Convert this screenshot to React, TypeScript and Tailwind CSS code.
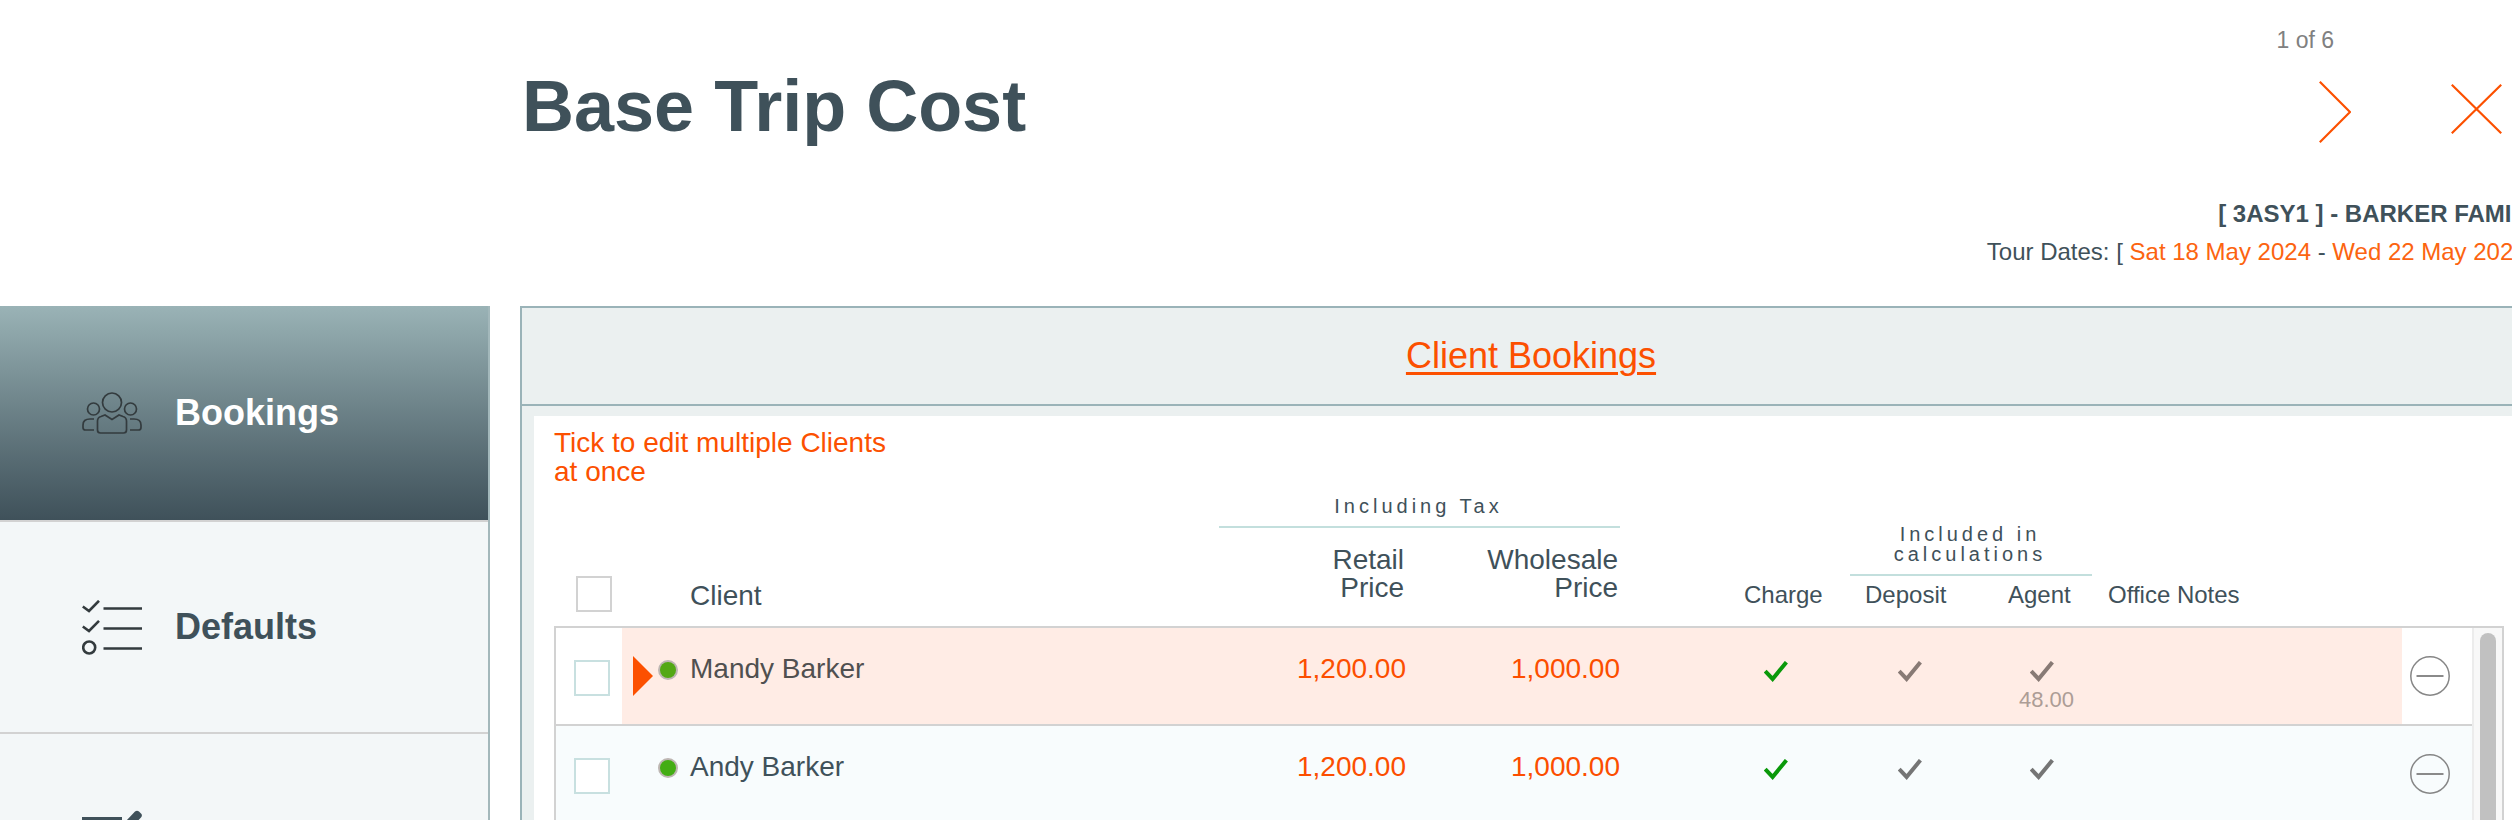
import React from "react";

function Check({ color }: { color: string }) {
  return (
    <svg width="24" height="21" viewBox="0 0 24 21" className="block">
      <path d="M1.2 10.2 L8.6 18 L22.4 1.2" fill="none" stroke={color} strokeWidth="4" />
    </svg>
  );
}

function Minus() {
  return (
    <svg width="40" height="40" viewBox="0 0 40 40" className="block">
      <circle cx="20" cy="20" r="19.2" fill="none" stroke="#868686" strokeWidth="1.5" />
      <path d="M6.5 20 H33.5" stroke="#8a8a8a" strokeWidth="2" />
    </svg>
  );
}

function UsersIcon() {
  return (
    <svg width="60" height="42" viewBox="0 0 60 42" fill="none" stroke="#333b3e" strokeWidth="1.7" className="block">
      <circle cx="30" cy="10.5" r="9.5" />
      <circle cx="11.5" cy="17" r="6" />
      <circle cx="48.5" cy="17" r="6" />
      <path d="M15.5 38 V29 Q15.5 25.5 19 24.5 L23 23 L30 27.5 L37 23 L41 24.5 Q44.5 25.5 44.5 29 V38 Q44.5 41 41.5 41 H18.5 Q15.5 41 15.5 38 Z" />
      <path d="M12 27 H8 Q1 27 1 33 V35.5 Q1 38 3.5 38 H12" />
      <path d="M48 27 H52 Q59 27 59 33 V35.5 Q59 38 56.5 38 H48" />
    </svg>
  );
}

function ListIcon() {
  return (
    <svg width="60" height="55" viewBox="0 0 60 55" fill="none" stroke="#333b3e" className="block">
      <path d="M0.8 6.5 L7 11 L17 0.8" strokeWidth="2.6" />
      <path d="M0.8 26.5 L7 31 L17 20.8" strokeWidth="2.6" />
      <circle cx="7.2" cy="47.5" r="6" strokeWidth="2.6" />
      <path d="M21.5 8.5 H60 M21.5 28.5 H60 M21.5 48.5 H60" strokeWidth="2.6" />
    </svg>
  );
}

function EditIcon() {
  return (
    <svg width="60" height="30" viewBox="0 0 60 30" className="block">
      <rect x="0" y="7" width="40" height="3" fill="#3f515a" />
      <path d="M44 11 L53 1.5 Q55 0 57 1.5 L59.5 4 Q60.5 6 59 7.5 L50 17 Z" fill="#3f515a" />
    </svg>
  );
}

function Row({ active }: { active: boolean }) {
  const check = active ? "#887a75" : "#757575";
  return (
    <div className="flex h-[98px] border-b-2 border-[#d2d2d2]">
      <div className={`w-[66px] pl-[18px] pt-[32px] ${active ? "bg-white" : "bg-[#f8fcfd]"}`}>
        <div className="w-[36px] h-[36px] border-2 border-[#c8e0e0] bg-white" />
      </div>
      <div className={`flex w-[1780px] ${active ? "bg-[#ffece5] text-[#505050]" : "bg-[#f8fcfd] text-[#3f515a]"}`}>
        <div className="w-[69px] flex items-start pl-[11px]">
          <div className="w-[20px] pt-[28px]">
            {active && (
              <svg width="20" height="40" viewBox="0 0 20 40" className="block">
                <path d="M0 0 L20 20 L0 40 Z" fill="#fc5000" />
              </svg>
            )}
          </div>
          <div className="ml-[5px] mt-[32px] w-[20px] h-[20px] rounded-full border-2 border-[#bdb6b2] flex items-center justify-center bg-[#bdb6b2]">
            <div className={`w-[16px] h-[16px] rounded-full ${active ? "bg-[#53a814]" : "bg-[#43ad14]"}`} />
          </div>
        </div>
        <div className="w-[528px] pt-[25px] text-[28px] leading-[32px] ml-[-1px]">{active ? "Mandy Barker" : "Andy Barker"}</div>
        <div className="w-[188px] pt-[25px] text-[28px] leading-[32px] text-right text-[#fc4e00]">1,200.00</div>
        <div className="w-[214px] pt-[25px] text-[28px] leading-[32px] text-right text-[#fc4e00]">1,000.00</div>
        <div className="w-[230px] pl-[144px] pt-[33px]"><Check color="#0a990a" /></div>
        <div className="w-[121px] pl-[48px] pt-[33px]"><Check color={check} /></div>
        <div className="w-[121px] pl-[48px] pt-[33px]">
          <div className="ml-[11px]"><Check color={check} /></div>
          {active && <div className="mt-[6px] text-[22px] leading-[24px] text-[#ad9d96]">48.00</div>}
        </div>
        <div className="flex-1" />
      </div>
      <div className={`w-[70px] pl-[8px] pt-[28px] ${active ? "bg-white" : "bg-[#f8fcfd]"}`}>
        <Minus />
      </div>
    </div>
  );
}

export default function App() {
  return (
    <div className="w-full h-[820px] overflow-hidden bg-white font-['Liberation_Sans',Arial,sans-serif] text-[#3f515a]">
      <div className="w-[2540px]">
        <header className="h-[306px] flex justify-between">
          <h1 className="ml-[522px] mt-[66px] text-[72px] leading-[80px] font-bold whitespace-nowrap">Base Trip Cost</h1>
          <div className="flex flex-col items-end">
            <div className="mt-[27px] mr-[206px] text-[23px] leading-[26px] text-[#808080]">1 of 6</div>
            <div className="mt-[28px] mr-[38px] flex items-start gap-[100px]">
              <svg width="32" height="62" viewBox="0 0 32 62" fill="none" stroke="#fc5000" strokeWidth="2.2" className="block">
                <path d="M0.8 0.8 L31 31 L0.8 61.2" />
              </svg>
              <svg width="51" height="50" viewBox="0 0 51 50" fill="none" stroke="#fc5000" strokeWidth="2.2" className="block mt-[3px]">
                <path d="M0.8 0.8 L50.2 49.2 M50.2 0.8 L0.8 49.2" />
              </svg>
            </div>
            <div className="mt-[57px] text-[24px] leading-[28px] font-bold whitespace-nowrap">[ 3ASY1 ] - BARKER FAMILY</div>
            <div className="mt-[10px] text-[24px] leading-[28px] whitespace-nowrap">
              Tour Dates: [ <span className="text-[#fc6410]">Sat 18 May 2024</span> - <span className="text-[#fc6410]">Wed 22 May 2024</span> ]
            </div>
          </div>
        </header>
        <div className="flex h-[514px] items-stretch">
          <aside className="w-[490px] shrink-0 border-r-2 border-[#a3b8bb] bg-[#f3f7f8] flex flex-col">
            <div className="h-[216px] shrink-0 border-b-2 border-[#d2d2d2] bg-gradient-to-b from-[#9ab3b6] to-[#3f515a] flex items-center pl-[82px]">
              <UsersIcon />
              <span className="ml-[33px] text-[36px] leading-[40px] font-bold text-white">Bookings</span>
            </div>
            <div className="h-[212px] shrink-0 border-b-2 border-[#d2d2d2] flex items-center pl-[82px]">
              <ListIcon />
              <span className="ml-[33px] text-[36px] leading-[40px] font-bold">Defaults</span>
            </div>
            <div className="pl-[82px] pt-[76px]">
              <EditIcon />
            </div>
          </aside>
          <main className="ml-[30px] flex-1 border-l-2 border-t-2 border-[#9ab3b8] bg-[#ebf0f0] flex flex-col">
            <div className="h-[98px] shrink-0 border-b-2 border-[#9ab3b8] flex items-center justify-center">
              <span className="text-[36px] leading-[40px] text-[#fc5000] underline decoration-[3px] underline-offset-[4px]">Client Bookings</span>
            </div>
            <div className="mt-[10px] ml-[12px] flex-1 bg-white">
              <div className="ml-[20px] h-[210px] flex">
                <div className="w-[665px] flex flex-col justify-between">
                  <div className="pt-[12px] text-[28px] leading-[29px] text-[#fc5000]">
                    Tick to edit multiple Clients<br />at once
                  </div>
                  <div className="flex items-end pb-[14px] pl-[22px]">
                    <div className="w-[36px] h-[36px] border-2 border-[#d2d2d2]" />
                    <div className="ml-[78px] text-[28px] leading-[32px]">Client</div>
                  </div>
                </div>
                <div className="w-[401px] pt-[80px]">
                  <div className="text-[20px] leading-[20px] tracking-[4px] text-center pr-[2px]">Including Tax</div>
                  <div className="mt-[10px] h-[2px] bg-[#c3dfdd]" />
                  <div className="mt-[18px] flex text-[28px] leading-[28px] text-right">
                    <div className="w-[185px]">Retail<br />Price</div>
                    <div className="w-[214px]">Wholesale<br />Price</div>
                  </div>
                </div>
                <div className="w-[230px] pl-[124px] pb-[17px] flex items-end text-[24px] leading-[28px]">Charge</div>
                <div className="w-[242px] flex flex-col justify-end pb-[17px]">
                  <div className="text-[20px] leading-[20px] tracking-[4px] text-center pr-[2px]">Included in<br />calculations</div>
                  <div className="mt-[10px] mb-[2px] h-[2px] bg-[#c3dfdd]" />
                  <div className="mt-[3px] flex text-[24px] leading-[28px]">
                    <div className="w-[158px] pl-[15px]">Deposit</div>
                    <div>Agent</div>
                  </div>
                </div>
                <div className="pl-[16px] pb-[17px] flex items-end text-[24px] leading-[28px] whitespace-nowrap">Office Notes</div>
              </div>
              <div className="ml-[20px] w-[1950px] h-[300px] border-2 border-[#d2d2d2] flex">
                <div className="w-[1916px]">
                  <Row active />
                  <Row active={false} />
                </div>
                <div className="w-[30px] border-l-2 border-[#ececec] bg-[#f8f8f8] pl-[6px] pt-[5px]">
                  <div className="w-[16px] h-[400px] rounded-full bg-[#c1c1c1]" />
                </div>
              </div>
            </div>
          </main>
        </div>
      </div>
    </div>
  );
}
